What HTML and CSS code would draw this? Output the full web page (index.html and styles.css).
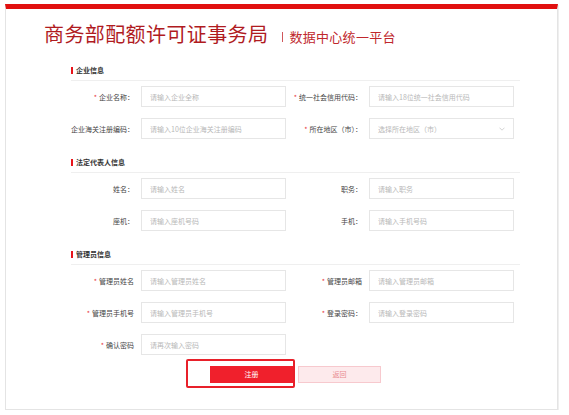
FILE: index.html
```html
<!DOCTYPE html>
<html lang="zh-CN">
<head>
<meta charset="utf-8">
<title>商务部配额许可证事务局 | 数据中心统一平台</title>
<link rel="stylesheet" href="styles.css">
</head>
<body>
<div class="page">
  <div class="card">
    <header class="brand">
      <h1 class="brand-title">商务部配额许可证事务局</h1>
      <span class="brand-sep"></span>
      <span class="brand-sub">数据中心统一平台</span>
    </header>

    <form class="form">
      <section class="section">
        <h2 class="section-title">企业信息</h2>
        <div class="grid">
          <label class="label"><span class="req">*</span>企业名称：</label>
          <input class="input" placeholder="请输入企业全称">
          <label class="label"><span class="req">*</span>统一社会信用代码：</label>
          <input class="input" placeholder="请输入18位统一社会信用代码">

          <label class="label">企业海关注册编码：</label>
          <input class="input" placeholder="请输入10位企业海关注册编码">
          <label class="label"><span class="req">*</span>所在地区（市）：</label>
          <div class="input select">
            <span class="select-text">选择所在地区（市）</span>
            <svg class="chevron" width="6" height="4" viewBox="0 0 6 4"><path d="M0.5 0.7 L3 3.2 L5.5 0.7" fill="none" stroke="#c8c8c8" stroke-width="0.8"/></svg>
          </div>
        </div>
      </section>

      <section class="section">
        <h2 class="section-title">法定代表人信息</h2>
        <div class="grid">
          <label class="label">姓名：</label>
          <input class="input" placeholder="请输入姓名">
          <label class="label">职务：</label>
          <input class="input" placeholder="请输入职务">

          <label class="label">座机：</label>
          <input class="input" placeholder="请输入座机号码">
          <label class="label">手机：</label>
          <input class="input" placeholder="请输入手机号码">
        </div>
      </section>

      <section class="section last">
        <h2 class="section-title">管理员信息</h2>
        <div class="grid">
          <label class="label"><span class="req">*</span>管理员姓名</label>
          <input class="input" placeholder="请输入管理员姓名">
          <label class="label"><span class="req">*</span>管理员邮箱</label>
          <input class="input" placeholder="请输入管理员邮箱">

          <label class="label"><span class="req">*</span>管理员手机号</label>
          <input class="input" placeholder="请输入管理员手机号">
          <label class="label"><span class="req">*</span>登录密码：</label>
          <input class="input" type="password" placeholder="请输入登录密码">

          <label class="label"><span class="req">*</span>确认密码</label>
          <input class="input" type="password" placeholder="请再次输入密码">
        </div>
      </section>

      <div class="actions">
        <div class="btn-wrap">
          <button type="button" class="btn btn-primary">注册</button>
          <span class="highlight"></span>
        </div>
        <button type="button" class="btn btn-light">返回</button>
      </div>
    </form>
  </div>
</div>
</body>
</html>
```

FILE: styles.css
```css
* {
  box-sizing: border-box;
}

html, body {
  margin: 0;
  padding: 0;
  background: #ffffff;
}

body {
  font-family: "Noto Sans CJK SC", "Microsoft YaHei", "Noto Sans", sans-serif;
  color: #333333;
}

.page {
  padding: 4px 0 0 5px;
}

.card {
  width: 553px;
  border: 1px solid #e4e4e4;
  border-top: 5px solid #e1100f;
  box-shadow: 1px 1px 0 #efefef;
  padding: 15px 0 26px 0;
}

.brand {
  display: flex;
  align-items: baseline;
  height: 20px;
  padding-left: 38px;
}

.brand-title {
  margin: 0;
  font-size: 20px;
  line-height: 20px;
  font-weight: 400;
  letter-spacing: 0.4px;
  color: #b01b1f;
}

.brand-sep {
  display: inline-block;
  width: 1px;
  height: 10px;
  background: #d0575b;
  margin: 0 6px 2px 14px;
  align-self: flex-end;
}

.brand-sub {
  font-size: 13px;
  line-height: 20px;
  letter-spacing: 0.3px;
  color: #c0272c;
}

.form {
  margin: 16px 0 0 65px;
  width: 449px;
}

.section {
  margin-bottom: 13px;
}

.section.last {
  margin-bottom: 11px;
}

.section-title {
  margin: 0;
  height: 21px;
  line-height: 20px;
  font-size: 7px;
  font-weight: 700;
  color: #333333;
  border-bottom: 1px solid #efefef;
  display: flex;
  align-items: center;
}

.section-title::before {
  content: "";
  display: inline-block;
  width: 2px;
  height: 7px;
  background: #e8141b;
  margin-right: 3px;
}

.grid {
  margin-top: 5px;
  display: grid;
  grid-template-columns: 70px 145px 83px 145px;
  grid-auto-rows: 21px;
  row-gap: 11px;
}

.label {
  display: flex;
  justify-content: flex-end;
  align-items: center;
  white-space: nowrap;
  padding-right: 7px;
  font-size: 7px;
  color: #444444;
}

.req {
  color: #e8323a;
  margin-right: 2px;
}

.input {
  width: 145px;
  height: 21px;
  margin: 0;
  border: 1px solid #e6e6e6;
  border-radius: 0;
  background: #ffffff;
  padding: 0 8px;
  font-family: inherit;
  font-size: 7px;
  color: #333333;
  outline: none;
}

.input::placeholder {
  color: #b8b8b8;
}

.select {
  display: flex;
  align-items: center;
  justify-content: space-between;
}

.select-text {
  color: #b8b8b8;
  font-size: 7px;
}

.chevron {
  display: block;
}

.actions {
  display: flex;
  justify-content: center;
  align-items: flex-start;
  gap: 5px;
  height: 17px;
}

.btn-wrap {
  position: relative;
  display: flex;
}

.btn {
  display: block;
  width: 83px;
  height: 17px;
  margin: 0;
  padding: 0;
  font-family: inherit;
  font-size: 7px;
  line-height: 15px;
  border-radius: 0;
  cursor: pointer;
}

.btn-primary {
  background: #f0202c;
  border: 1px solid #f0202c;
  color: #ffffff;
}

.btn-light {
  background: #fdeaec;
  border: 1px solid #f7c9ce;
  color: #e98a90;
}

.highlight {
  position: absolute;
  left: -24px;
  top: -7px;
  width: 109px;
  height: 29px;
  border: 2px solid #e8202a;
  border-radius: 2px;
  pointer-events: none;
}
```
